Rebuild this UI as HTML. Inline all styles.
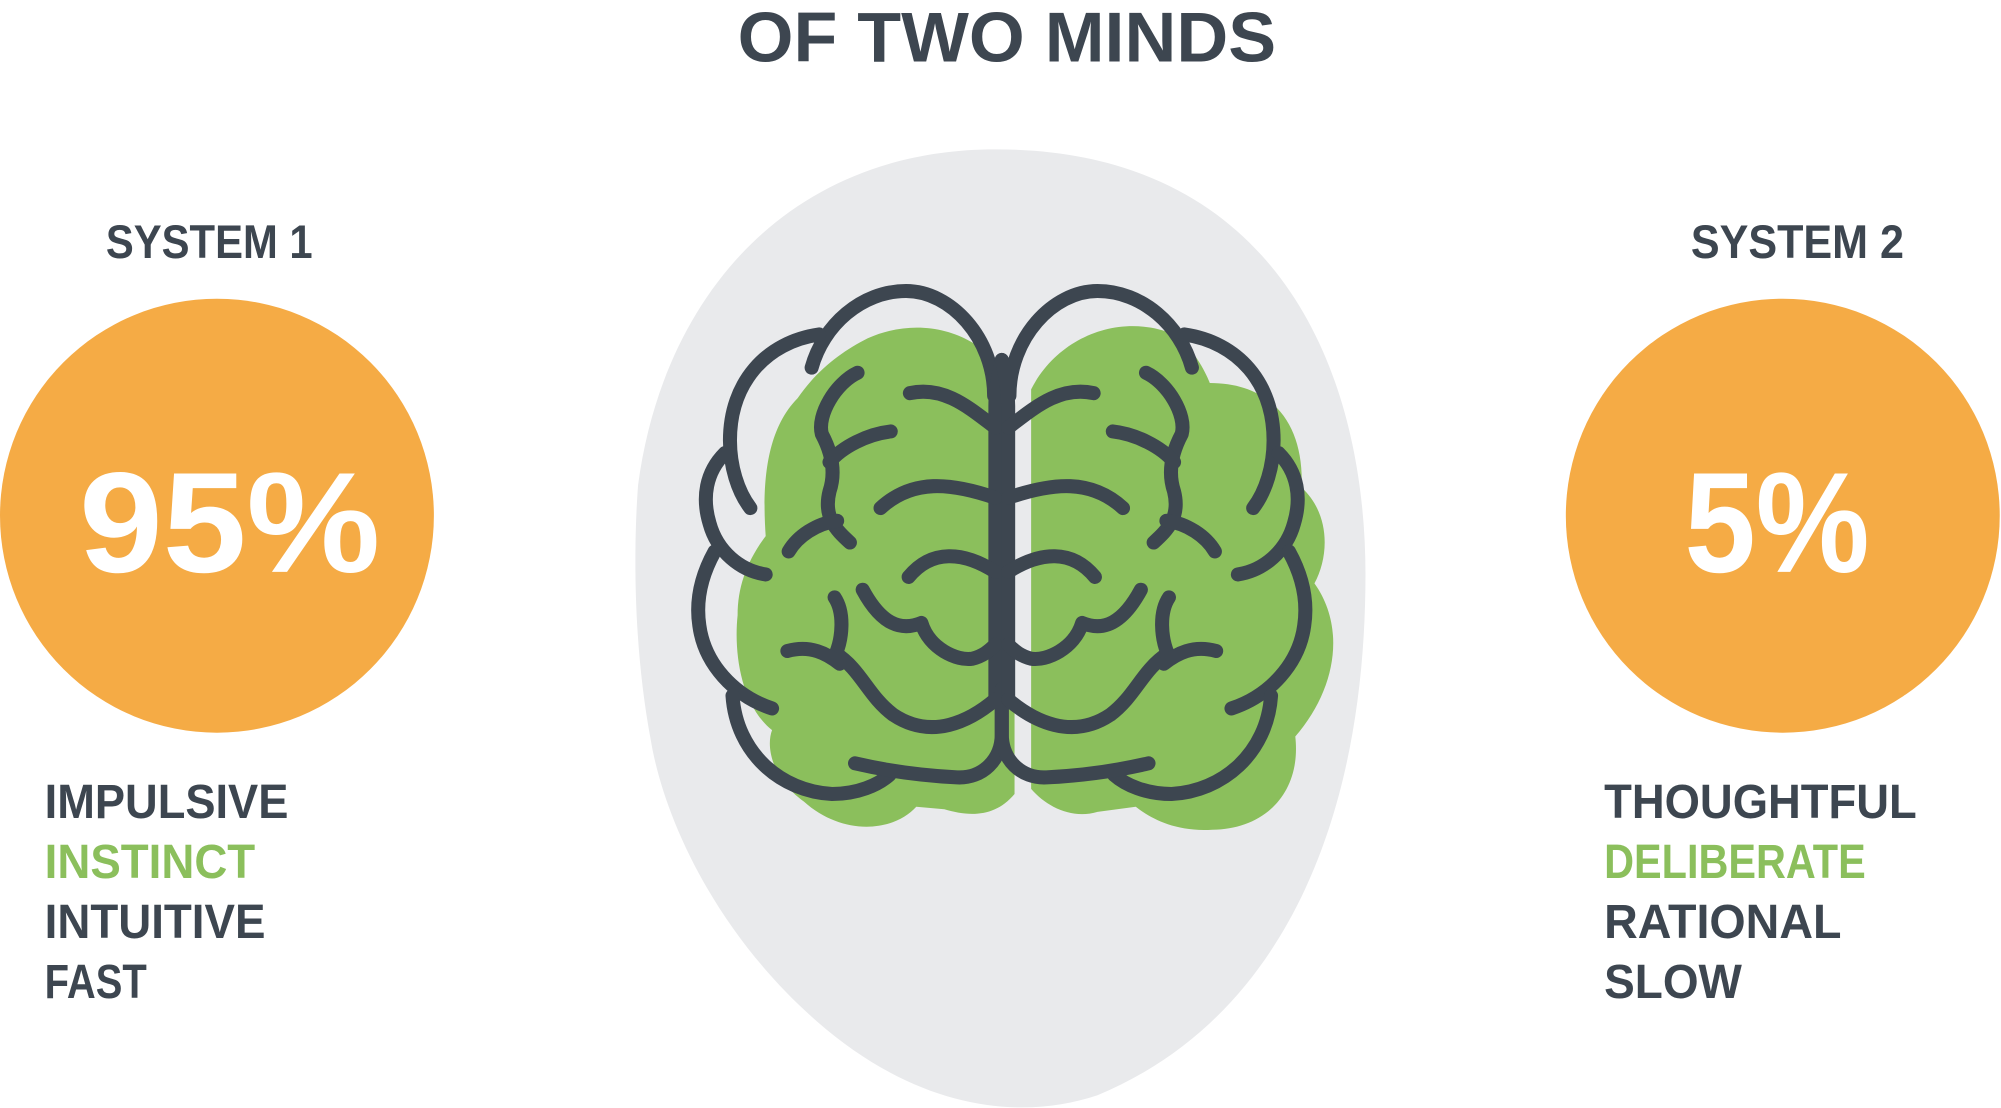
<!DOCTYPE html>
<html><head><meta charset="utf-8"><style>html,body{margin:0;padding:0;background:#fff;width:2001px;height:1108px;overflow:hidden}svg{display:block}</style></head>
<body>
<svg width="2001" height="1108" viewBox="0 0 1568 868" preserveAspectRatio="none" xmlns="http://www.w3.org/2000/svg" font-family="Liberation Sans, sans-serif" font-weight="bold">
<path d="M780,117 C1000,117 1070,290 1070,450 C1070,650 1000,800 860,858 C800,878 720,870 640,800 C560,730 520,640 510,580 C495,500 497,420 500,380 C520,230 620,117 780,117 Z" fill="#e9eaec"/>
<circle cx="170" cy="404" r="170" fill="#f5ab45"/>
<circle cx="1397" cy="404" r="170" fill="#f5ab45"/>
<g fill="#8bbf5c">
<path d="M680,265 C725,245 775,262 795,305 L795,622 C780,640 760,640 740,634 L718,632 C700,652 660,655 630,628 C605,610 600,585 605,572 C580,552 575,510 578,482 C578,460 585,440 600,420 C598,390 597,340 625,312 C640,290 660,275 680,265 Z"/>
<path d="M808,305 C830,262 880,245 920,262 C935,272 945,292 948,300 C995,300 1022,330 1020,382 C1042,402 1042,435 1030,457 C1055,492 1047,540 1015,577 C1020,622 990,650 950,650 C920,652 900,640 890,632 L860,636 C840,642 820,632 808,618 Z"/>
</g>
<g id="L" fill="none" stroke="#3d4650" stroke-width="11" stroke-linecap="round" stroke-linejoin="round">
<path d="M779,310 C779,265 745,228 710,228 C675,228 645,255 636,288"/>
<path d="M642,262 C600,268 572,300 572,345 C572,365 578,385 588,398"/>
<path d="M568,355 C553,370 550,390 556,410 C562,432 580,447 600,450"/>
<path d="M560,432 C550,450 545,470 548,490 C552,520 575,545 605,555"/>
<path d="M574,545 C577,590 612,620 652,622 C672,622 688,615 697,607"/>
<path d="M670,598 C700,605 730,608 750,609 C770,610 785,595 785,575 L785,540"/>
<path d="M785,282 C782,295 780,305 780,318 L780,548"/>
<path d="M713,308 C740,302 760,320 780,335"/>
<path d="M672,292 C655,300 640,325 644,340 C652,355 655,370 650,385 C645,405 655,415 666,425"/>
<path d="M698,338 C680,340 660,350 650,362"/>
<path d="M690,398 C715,375 745,378 780,390"/>
<path d="M618,432 C625,420 640,410 656,408"/>
<path d="M712,452 C730,430 755,432 780,448"/>
<path d="M676,462 C690,488 705,495 722,488 C728,508 750,518 762,516 C770,514 775,510 780,505"/>
<path d="M654,468 C662,480 660,500 655,512 C675,525 680,545 700,560 C730,580 760,565 780,548"/>
<path d="M617,510 C635,505 648,512 658,520"/>
</g>
<use href="#L" transform="translate(1570,0) scale(-1,1)"/>
<g fill="#3d4650">
<text x="578" y="48" font-size="55" textLength="422" lengthAdjust="spacingAndGlyphs">OF TWO MINDS</text>
<text x="83" y="202" font-size="37" textLength="162" lengthAdjust="spacingAndGlyphs">SYSTEM 1</text>
<text x="1325" y="202" font-size="37" textLength="167" lengthAdjust="spacingAndGlyphs">SYSTEM 2</text>
<text x="35" y="641" font-size="38" textLength="191" lengthAdjust="spacingAndGlyphs">IMPULSIVE</text>
<text x="35" y="735" font-size="38" textLength="173" lengthAdjust="spacingAndGlyphs">INTUITIVE</text>
<text x="35" y="782" font-size="38" textLength="80" lengthAdjust="spacingAndGlyphs">FAST</text>
<text x="1257" y="641" font-size="38" textLength="245" lengthAdjust="spacingAndGlyphs">THOUGHTFUL</text>
<text x="1257" y="735" font-size="38" textLength="186" lengthAdjust="spacingAndGlyphs">RATIONAL</text>
<text x="1257" y="782" font-size="38" textLength="108" lengthAdjust="spacingAndGlyphs">SLOW</text>
</g>
<g fill="#8bbf5c">
<text x="35" y="688" font-size="38" textLength="165" lengthAdjust="spacingAndGlyphs">INSTINCT</text>
<text x="1257" y="688" font-size="38" textLength="205" lengthAdjust="spacingAndGlyphs">DELIBERATE</text>
</g>
<g fill="#fff">
<text x="62" y="448" font-size="112" textLength="236" lengthAdjust="spacingAndGlyphs">95%</text>
<text x="1320" y="448" font-size="112" textLength="145" lengthAdjust="spacingAndGlyphs">5%</text>
</g>
</svg>
</body></html>
